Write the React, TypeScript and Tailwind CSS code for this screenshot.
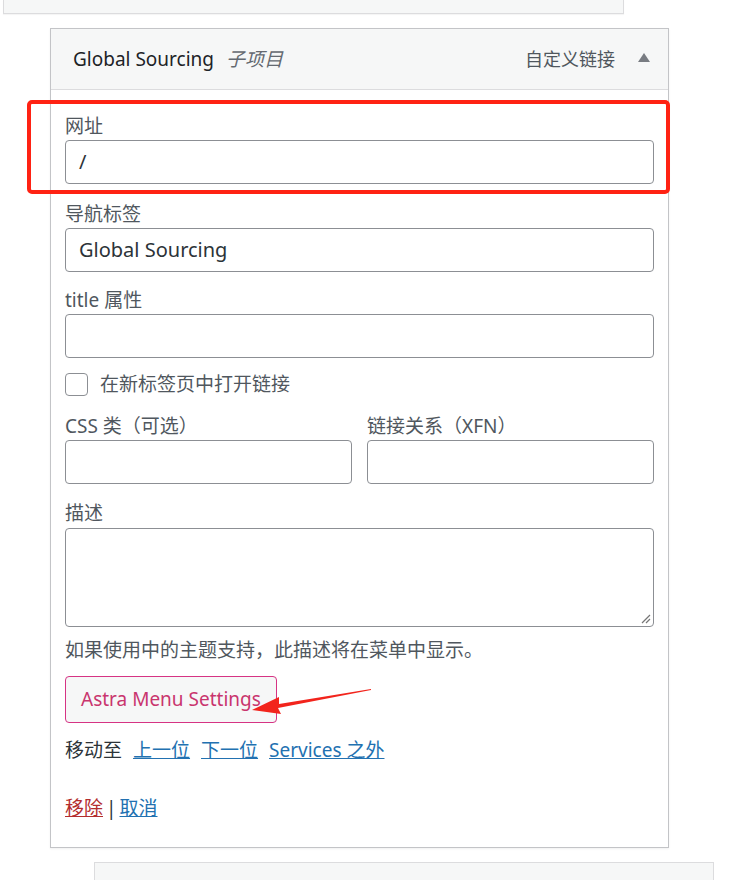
import React from "react";

const font = { fontFamily: '"Noto Sans", "Noto Sans CJK SC", sans-serif' };

function Field({ label, value, className = "" }: { label: string; value?: string; className?: string }) {
  return (
    <div className={"flex flex-col " + className}>
      <label className="text-[19px] leading-[26px] text-[#50575e]">{label}</label>
      <div className="mt-[1px] h-[44px] rounded-[4px] border border-[#8c8f94] bg-white px-[13px] flex items-center text-[20px] text-[#2c3338]">
        {value}
      </div>
    </div>
  );
}

export default function App() {
  return (
    <div className="relative w-[736px] h-[880px] overflow-hidden bg-white" style={font}>
      {/* previous menu item (collapsed) */}
      <div className="ml-[3px] w-[621px] h-[14px] border-x border-b border-[#dcdcde] bg-[#f6f7f7] shadow-[0_1px_1px_rgba(0,0,0,0.04)]" />

      {/* current item */}
      <div className="ml-[50px] mt-[14px] w-[619px] border border-[#c3c4c7] bg-white shadow-[0_1px_2px_rgba(0,0,0,0.06)]">
        <div className="h-[61px] border-b border-[#dcdcde] bg-[#f6f7f7] flex items-center pl-[22px] pr-[17px]">
          <span className="text-[19px] text-[#1d2327]">Global Sourcing</span>
          <span className="ml-[12px] text-[19px] italic text-[#646970]">子项目</span>
          <span className="ml-auto text-[18px] text-[#50575e]">自定义链接</span>
          <svg width="14" height="10" viewBox="0 0 14 10" className="ml-[22px] mb-[2px]">
            <path d="M7 0 L13 9 L1 9 Z" fill="#787c82" />
          </svg>
        </div>

        <div className="px-[14px] pt-[23px] pb-[26px] flex flex-col">
          <Field label="网址" value="/" />
          <Field label="导航标签" value="Global Sourcing" className="mt-[17px]" />
          <Field label="title 属性" className="mt-[15px]" />

          <label className="mt-[13px] flex items-center gap-[12px]">
            <span className="w-[23px] h-[23px] rounded-[4px] border border-[#8c8f94] bg-white" />
            <span className="text-[19px] leading-[26px] text-[#50575e]">在新标签页中打开链接</span>
          </label>

          <div className="mt-[16px] grid grid-cols-2 gap-x-[15px]">
            <Field label="CSS 类（可选）" />
            <Field label="链接关系（XFN）" />
          </div>

          <div className="mt-[16px] flex flex-col">
            <label className="text-[19px] leading-[26px] text-[#50575e]">描述</label>
            <div className="relative mt-[2px] h-[99px] rounded-[4px] border border-[#8c8f94] bg-white">
              <svg width="12" height="12" viewBox="0 0 12 12" className="absolute right-[2px] bottom-[2px]">
                <path d="M11 3 L3 11 M11 7 L7 11" stroke="#767676" strokeWidth="1.2" />
              </svg>
            </div>
          </div>

          <p className="mt-[10px] text-[19px] leading-[26px] text-[#50575e]">如果使用中的主题支持，此描述将在菜单中显示。</p>

          <div className="mt-[13px]">
            <button className="h-[47px] px-[15px] rounded-[4px] border border-[#d63384] bg-[#f6f7f7] text-[19px] text-[#c9356e]">
              Astra Menu Settings
            </button>
          </div>

          <div className="mt-[14px] flex items-center gap-[11px] text-[19px] leading-[26px]">
            <span className="text-[#2c3338]">移动至</span>
            <a className="text-[#2271b1] underline">上一位</a>
            <a className="text-[#2271b1] underline">下一位</a>
            <a className="text-[#2271b1] underline">Services 之外</a>
          </div>

          <div className="mt-[32px] flex items-center gap-[3px] text-[19px] leading-[26px]">
            <a className="text-[#b32d2e] underline">移除</a>
            <span className="text-[#2c3338]">|</span>
            <a className="text-[#2271b1] underline">取消</a>
          </div>
        </div>
      </div>

      {/* next menu item */}
      <div className="ml-[94px] mt-[14px] w-[620px] h-[40px] border border-[#dcdcde] bg-[#f6f7f7]" />

      {/* annotation: red box */}
      <div className="absolute left-[27px] top-[100px] w-[643px] h-[94px] rounded-[5px] border-[4px] border-[#ff2213]" />

      {/* annotation: arrow */}
      <svg className="absolute left-[245px] top-[684px]" width="130" height="36" viewBox="0 0 130 36">
        <path d="M126 5 L34 20 L34 13 L7 26 L36 30 L33 24 L126 6 Z" fill="#f2241c" />
      </svg>
    </div>
  );
}
